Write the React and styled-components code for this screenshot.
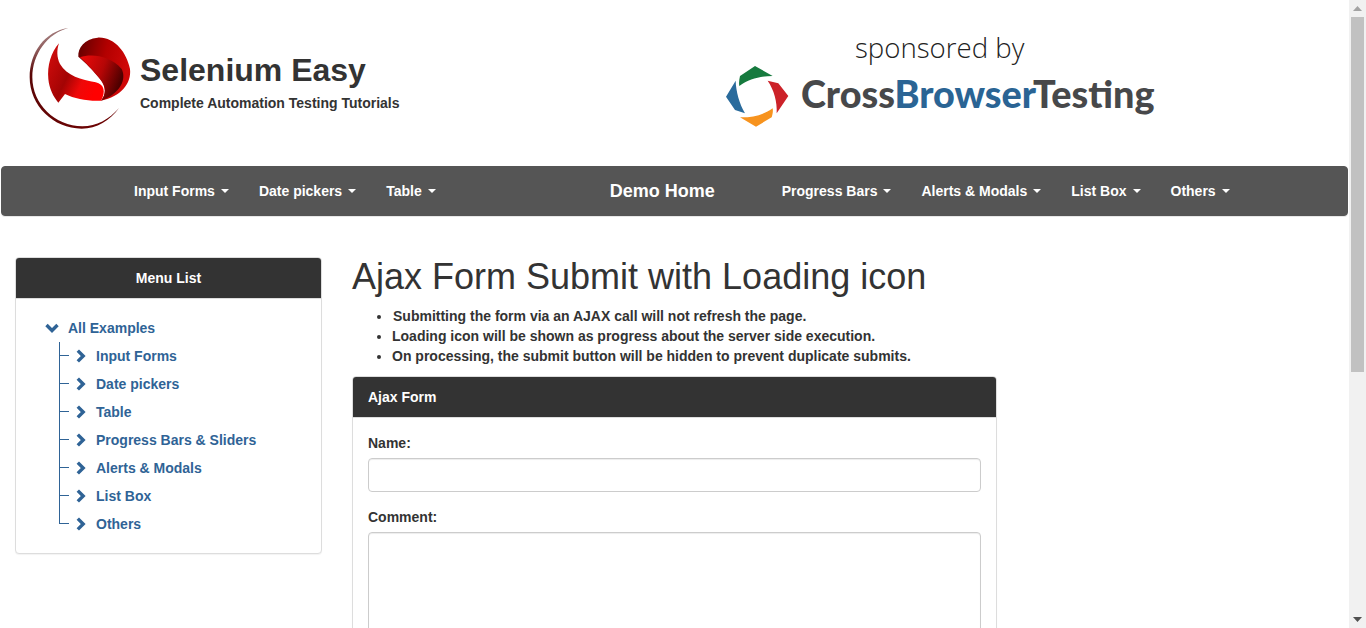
import React from 'react';
import styled, { createGlobalStyle } from 'styled-components';

const Global = createGlobalStyle`
  html, body { margin: 0; padding: 0; height: 100%; overflow: hidden; background: #fff; }
  body { font-family: "Liberation Sans", Arial, sans-serif; font-size: 14px; line-height: 20px; color: #333; }
  * { box-sizing: border-box; }
`;

const Viewport = styled.div`display: flex; height: 628px; overflow: hidden;`;
const Page = styled.div`flex: 1; min-width: 0; overflow: hidden;`;

const ScrollTrack = styled.div`
  width: 17px; height: 628px; background: #f1f1f1; display: flex; flex-direction: column; align-items: center;
`;
const ScrollBtn = styled.div`height: 17px; width: 17px; display: flex; align-items: center; justify-content: center; flex: none;`;
const ScrollThumb = styled.div`width: 13px; height: 355px; background: #c1c1c1; flex: none;`;
const ScrollGap = styled.div`flex: 1;`;

const Header = styled.header`display: flex; height: 166px; padding: 24px 0 0 25px;`;
const Brand = styled.div`display: flex; align-items: flex-start; width: 375px; gap: 5px;`;
const LogoSvg = styled.svg`flex: none; display: block;`;
const BrandText = styled.div`display: flex; flex-direction: column;`;
const BrandTitle = styled.div`
  font-size: 32px; line-height: 40px; font-weight: 700; margin-top: 26px; white-space: nowrap;
`;
const BrandSub = styled.div`
  font-size: 14px; line-height: 20px; font-weight: 700; margin-top: 3px; white-space: nowrap;
`;
const Sponsor = styled.div`margin-left: 320px; display: flex; flex-direction: column; width: 445px;`;
const SponsorBy = styled.div`
  font-family: "Open Sans", sans-serif; font-weight: 300; font-size: 27.6px; line-height: 36px; color: #222;
  margin-top: 5px; padding-left: 135px; white-space: nowrap;
`;
const SponsorRow = styled.div`display: flex; align-items: center; gap: 6px; height: 72px; margin-top: -5px;`;
const CbtName = styled.div`
  font-family: "Lato", sans-serif; font-weight: 900; font-size: 37.8px; line-height: 44px; color: #47484a;
  white-space: nowrap; margin-top: -4px;
`;
const CbtBlue = styled.span`color: #2a6494;`;

const Nav = styled.nav`
  margin: 0 1px; height: 50px; width: 1347px; background: #555; border: 1px solid #555; border-radius: 4px;
  box-shadow: 0 1px 0 #e7e7e7;
  display: flex; align-items: center; padding-left: 117px;
`;
const NavGroup = styled.div`display: flex; margin-left: ${p => p.$offset || 0}px;`;
const NavItem = styled.a`
  padding: 0 15px; color: #fff; font-weight: 700; font-size: 14px; line-height: 20px; white-space: nowrap;
  display: flex; align-items: center;
`;
const Caret = styled.span`
  width: 0; height: 0; margin-left: 6px; border-top: 4px solid #fff; border-left: 4px solid transparent; border-right: 4px solid transparent;
`;
const NavBrand = styled.a`
  margin-left: 159px; color: #fff; font-weight: 700; font-size: 18px; line-height: 20px; white-space: nowrap;
`;

const Main = styled.main`display: flex; padding: 41px 0 0 15px; gap: 30px; align-items: flex-start;`;
const SideCol = styled.aside`width: 307px; flex: none;`;
const Panel = styled.section`
  background: #fff; border: 1px solid #ddd; border-radius: 4px; overflow: hidden; box-shadow: 0 1px 1px rgba(0,0,0,.05);
`;
const PanelHead = styled.div`
  height: 41px; background: #333; color: #fff; font-weight: 700; font-size: 14px; line-height: 20px;
  padding: 10px 15px; border-bottom: 1px solid #ddd; text-align: ${p => p.$center ? 'center' : 'left'};
`;
const TreeBody = styled.div`padding: 15px 29px 15px;`;
const TreeRoot = styled.div`
  display: flex; align-items: center; height: 28px; color: #2f6396; font-weight: 700; gap: 9px;
`;
const TreeList = styled.ul`list-style: none; margin: 0; padding: 0 0 0 14px;`;
const TreeItem = styled.li`
  position: relative; display: flex; align-items: center; height: 28px; padding-left: 17px; gap: 10px;
  color: #2f6396; font-weight: 700;
  &::before { content: ""; position: absolute; left: 0; top: 0; bottom: ${p => p.$last ? '14px' : 0}; width: 1px; background: #2f6396; }
  &::after { content: ""; position: absolute; left: 0; top: 13px; width: 10px; height: 1px; background: #2f6396; }
`;

const Content = styled.div`width: 645px; flex: none;`;
const Title = styled.h1`
  font-size: 36px; line-height: 40px; font-weight: 400; margin: 0 0 9px; color: #333; white-space: nowrap;
`;
const Notes = styled.ul`margin: 0 0 10px; padding: 0 0 0 40px; font-weight: 700;`;
const Note = styled.li`line-height: 20px; &:first-child { padding-left: 1px; }`;
const FormBody = styled.div`padding: 15px;`;
const Field = styled.div`margin-bottom: 15px;`;
const Label = styled.label`display: block; font-weight: 700; margin-bottom: 5px; line-height: 20px;`;
const Input = styled.input`
  display: block; width: 100%; height: 34px; border: 1px solid #ccc; border-radius: 4px; background: #fff;
  box-shadow: inset 0 1px 1px rgba(0,0,0,.075); padding: 6px 12px;
`;
const Area = styled.textarea`
  display: block; width: 100%; height: 140px; border: 1px solid #ccc; border-radius: 4px; background: #fff;
  box-shadow: inset 0 1px 1px rgba(0,0,0,.075); padding: 6px 12px;
`;

const SLogo = () => (
  <LogoSvg width="110" height="108" viewBox="0 0 330 324">
    <defs>
      <linearGradient id="ring" x1="0.2" y1="0" x2="0.8" y2="1">
        <stop offset="0" stopColor="#b9a0a0" />
        <stop offset=".25" stopColor="#5a0606" />
        <stop offset="1" stopColor="#6d0303" />
      </linearGradient>
      <linearGradient id="top" x1="0" y1="0" x2="1" y2="0.3">
        <stop offset="0" stopColor="#5e0000" />
        <stop offset=".55" stopColor="#b30000" />
        <stop offset="1" stopColor="#d00808" />
      </linearGradient>
      <linearGradient id="inner" x1="0" y1="0" x2="1" y2="0.4">
        <stop offset="0" stopColor="#ee0a0a" />
        <stop offset=".55" stopColor="#b50606" />
        <stop offset="1" stopColor="#4e0000" />
      </linearGradient>
      <linearGradient id="left" x1="0" y1="0" x2="1" y2="0.5">
        <stop offset="0" stopColor="#d80d0d" />
        <stop offset=".5" stopColor="#a30404" />
        <stop offset=".75" stopColor="#ee0808" />
        <stop offset="1" stopColor="#ff0000" />
      </linearGradient>
    </defs>
    <path fill="url(#ring)" d="M130 12C60 22 14 85 14 160C14 245 85 314 170 314C215 314 255 290 282 252C252 286 215 307 172 307C90 307 22 240 22 160C22 90 68 28 130 12Z" />
    <path fill="url(#top)" d="M160 98C158 72 178 44 218 41C268 38 305 85 315 135C320 178 288 218 228 230C243 212 245 190 225 165C205 140 180 115 160 98Z" />
    <path fill="url(#inner)" d="M165 100C200 88 255 95 290 135C305 165 288 208 228 230C243 212 245 190 225 165C205 140 185 118 165 100Z" />
    <path fill="url(#left)" d="M102 58C78 85 66 125 70 165C73 195 85 218 100 236L120 210C150 225 190 232 228 230C243 205 238 180 212 175C170 168 125 155 105 120C95 100 95 78 102 58Z" />
  </LogoSvg>
);

const CbtLogo = () => (
  <LogoSvg width="75" height="72" viewBox="0 0 225 216">
    <path fill="#167a3e" d="M58 78C56 68 58 58 60 48L105 18L158 48C125 48 88 56 58 78Z" />
    <path fill="#cc2229" d="M143 62L175 70L205 108L170 160C172 125 162 90 143 62Z" />
    <path fill="#f7931e" d="M158 145C160 155 157 165 155 172L108 200L60 172C95 173 130 165 158 145Z" />
    <path fill="#2a6b9c" d="M47 62L18 110L45 150L75 160C58 130 48 95 47 62Z" />
  </LogoSvg>
);

const ChevronRight = () => (
  <LogoSvg width="10" height="14" viewBox="0 0 10 14"><path d="M1.8 1.6L7.2 7L1.8 12.4" fill="none" stroke="#2f6396" strokeWidth="3.4" /></LogoSvg>
);
const ChevronDown = () => (
  <LogoSvg width="14" height="10" viewBox="0 0 14 10"><path d="M1.5 2L7 7.5L12.5 2" fill="none" stroke="#2f6396" strokeWidth="3.4" /></LogoSvg>
);

const left = ['Input Forms', 'Date pickers', 'Table'];
const right = ['Progress Bars', 'Alerts & Modals', 'List Box', 'Others'];
const tree = ['Input Forms', 'Date pickers', 'Table', 'Progress Bars & Sliders', 'Alerts & Modals', 'List Box', 'Others'];
const notes = [
  'Submitting the form via an AJAX call will not refresh the page.',
  'Loading icon will be shown as progress about the server side execution.',
  'On processing, the submit button will be hidden to prevent duplicate submits.',
];

export default function App() {
  return (
    <Viewport>
      <Global />
      <Page>
        <Header>
          <Brand>
            <SLogo />
            <BrandText>
              <BrandTitle>Selenium Easy</BrandTitle>
              <BrandSub>Complete Automation Testing Tutorials</BrandSub>
            </BrandText>
          </Brand>
          <Sponsor>
            <SponsorBy>sponsored by</SponsorBy>
            <SponsorRow>
              <CbtLogo />
              <CbtName>Cross<CbtBlue>Browser</CbtBlue>Testing</CbtName>
            </SponsorRow>
          </Sponsor>
        </Header>
        <Nav>
          <NavGroup>
            {left.map(t => <NavItem key={t}>{t}<Caret /></NavItem>)}
          </NavGroup>
          <NavBrand>Demo Home</NavBrand>
          <NavGroup $offset={52}>
            {right.map(t => <NavItem key={t}>{t}<Caret /></NavItem>)}
          </NavGroup>
        </Nav>
        <Main>
          <SideCol>
            <Panel>
              <PanelHead $center>Menu List</PanelHead>
              <TreeBody>
                <TreeRoot><ChevronDown />All Examples</TreeRoot>
                <TreeList>
                  {tree.map((t, i) => (
                    <TreeItem key={t} $last={i === tree.length - 1}><ChevronRight />{t}</TreeItem>
                  ))}
                </TreeList>
              </TreeBody>
            </Panel>
          </SideCol>
          <Content>
            <Title>Ajax Form Submit with Loading icon</Title>
            <Notes>{notes.map(n => <Note key={n}>{n}</Note>)}</Notes>
            <Panel>
              <PanelHead>Ajax Form</PanelHead>
              <FormBody>
                <Field><Label>Name:</Label><Input /></Field>
                <Field><Label>Comment:</Label><Area /></Field>
              </FormBody>
            </Panel>
          </Content>
        </Main>
      </Page>
      <ScrollTrack>
        <ScrollBtn><svg width="9" height="5" viewBox="0 0 9 5"><path d="M4.5 0L9 5H0Z" fill="#a3a3a3" /></svg></ScrollBtn>
        <ScrollThumb />
        <ScrollGap />
        <ScrollBtn><svg width="9" height="5" viewBox="0 0 9 5"><path d="M0 0H9L4.5 5Z" fill="#505050" /></svg></ScrollBtn>
      </ScrollTrack>
    </Viewport>
  );
}
